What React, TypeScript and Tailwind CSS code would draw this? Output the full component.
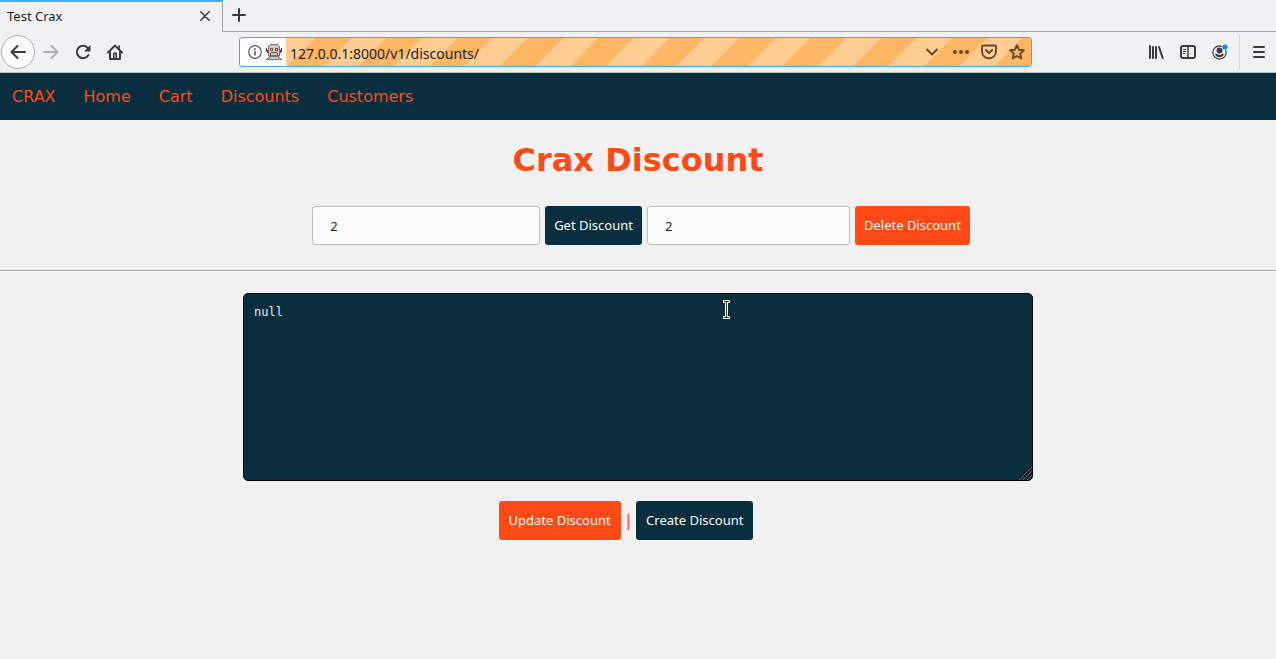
import { useState } from "react";

const navLinks = ["CRAX", "Home", "Cart", "Discounts", "Customers"];

function BackIcon() {
  return (
    <svg width="16" height="16" viewBox="0 0 16 16" fill="none" stroke="#3b3b3d" strokeWidth="2" strokeLinecap="round" strokeLinejoin="round">
      <path d="M15 8H1.500M7.500 2 1.500 8l6 6" />
    </svg>
  );
}

function ForwardIcon() {
  return (
    <svg width="16" height="16" viewBox="0 0 16 16" fill="none" stroke="#b0b0b2" strokeWidth="2" strokeLinecap="round" strokeLinejoin="round">
      <path d="M1 8h13.500M8.500 2l6 6-6 6" />
    </svg>
  );
}

function ReloadIcon() {
  return (
    <svg width="16" height="16" viewBox="0 0 16 16" fill="none">
      <path d="M13.200 4.500A6.200 6.200 0 1 0 13.500 11" stroke="#3b3b3d" strokeWidth="2" strokeLinecap="round" />
      <path d="M15.500 1v6.500H9z" fill="#3b3b3d" />
    </svg>
  );
}

function HomeIcon() {
  return (
    <svg width="16" height="16" viewBox="0 0 16 16" fill="none" stroke="#3b3b3d" strokeWidth="2" strokeLinecap="round" strokeLinejoin="round">
      <path d="M1 8.500 8 1.500l7 7M3 8v7h10V8" />
      <path d="M12.200 2v2.500" strokeWidth="1.600" />
      <path d="M6.800 14V9.300h2.400V14" strokeWidth="1.600" />
    </svg>
  );
}

function InfoIcon() {
  return (
    <svg width="14" height="14" viewBox="0 0 14 14" fill="none" stroke="#5e5e60">
      <circle cx="7" cy="7" r="6.300" strokeWidth="1.200" />
      <path d="M7 6.200v4.300M7 3.300v1.600" strokeWidth="1.700" />
    </svg>
  );
}

function RobotIcon() {
  return (
    <svg width="16" height="16" viewBox="0 0 16 16" shapeRendering="crispEdges">
      <path d="M0 4h1v4H0zM15 4h1v4h-1zM1 6h1v3H1zM14 6h1v3h-1z" fill="#c01030" />
      <path d="M4 0h8v1h1v1h1v10h-1v1h1v1h1v1h1v1H0v-1h1v-1h1v-1h1v-1H2V2h1V1h1z" fill="#77716e" />
      <path d="M4 1h8v1h1v9H3V2h1zM4 13h8v1H4zM2 14h12v1H2z" fill="#cdc9c5" />
      <path d="M4 4h3v3H4zM9 4h3v3H9z" fill="#75543a" />
      <path d="M5 5h1v1H5zM10 5h1v1h-1z" fill="#ffe0a0" />
      <path d="M5 8h6v1h1v2h-1V9H5v2H4V9h1z" fill="#5a5350" />
      <path d="M5 9h6v1H5z" fill="#e8b7a8" />
    </svg>
  );
}

function PocketIcon() {
  return (
    <svg width="16" height="16" viewBox="0 0 16 16" fill="none" stroke="#624b2f" strokeLinecap="round" strokeLinejoin="round" strokeWidth="1.900">
      <path d="M2 1.500h12a1 1 0 0 1 1 1V7.500a7 6.800 0 0 1-14 0v-5a1 1 0 0 1 1-1z" />
      <path d="m4.800 6 3.200 3 3.200-3" />
    </svg>
  );
}

function StarIcon() {
  return (
    <svg width="16" height="16" viewBox="0 0 16 16" fill="none" stroke="#624b2f" strokeLinejoin="round" strokeWidth="1.900">
      <path d="m8 1.200 2 4.500 4.900.5-3.700 3.300 1.100 5L8 12l-4.300 2.500 1.100-5L1.100 6.200 6 5.700z" />
    </svg>
  );
}

function LibraryIcon() {
  return (
    <svg width="16" height="16" viewBox="0 0 16 16" fill="none" stroke="#3b3b3d" strokeWidth="2" strokeLinecap="round">
      <path d="M2 2v12M5 3v11M8 3v11M11 3l3.700 11" />
    </svg>
  );
}

function SidebarIcon() {
  return (
    <svg width="16" height="16" viewBox="0 0 16 16" fill="none" stroke="#3b3b3d">
      <rect x="1" y="2" width="14" height="12" rx="2" strokeWidth="2" />
      <path d="M8 2v12" strokeWidth="1.500" />
      <path d="M3 5.500h3M3 7.500h3M3 9.500h2" strokeWidth="1" />
    </svg>
  );
}

function AccountIcon() {
  return (
    <svg width="16" height="16" viewBox="0 0 16 16" fill="none">
      <circle cx="7.500" cy="8.500" r="6.600" stroke="#3b3b3d" strokeWidth="1.200" />
      <circle cx="7.500" cy="6.500" r="3" fill="#3b3b3d" />
      <path d="M3.200 9.800h1.300c1.700 1.500 4.300 1.500 6 0h1.300c0 2-2 3.400-4.300 3.400s-4.300-1.400-4.300-3.400z" fill="#3b3b3d" />
      <circle cx="13" cy="3" r="3.400" fill="#f0f1f3" />
      <circle cx="13" cy="3" r="2.600" fill="#0a84ff" />
    </svg>
  );
}

function BrowserChrome() {
  const [url, setUrl] = useState("127.0.0.1:8000/v1/discounts/");
  return (
    <header className="border-b border-[#b9bcbd] bg-[#f0f1f3] font-['Noto_Sans',sans-serif] text-[#1d1d1f]">
      <div className="flex h-8">
        <div className="flex w-[223px] items-center justify-between border-t-2 border-r border-t-[#3daee9] border-r-[#a3a6a7] pr-[11px] pb-0.5 pl-[7px]">
          <span className="text-[13px] leading-4">Test Crax</span>
          <button aria-label="Close tab" className="p-px">
            <svg width="10" height="10" viewBox="0 0 10 10" stroke="#3b3b3d" strokeWidth="1.500" strokeLinecap="round">
              <path d="m.8.8 8.400 8.400M9.200.8.800 9.200" />
            </svg>
          </button>
        </div>
        <div className="flex flex-1 items-center border-b border-[#a3a6a7] pb-px pl-[9px]">
          <button aria-label="New tab">
            <svg width="14" height="14" viewBox="0 0 14 14" stroke="#3b3b3d" strokeWidth="2" strokeLinecap="round">
              <path d="M7 1v12M1 7h12" />
            </svg>
          </button>
        </div>
      </div>
      <div className="flex h-10 items-center">
        <nav aria-label="Browser" className="flex w-[239px] items-center pl-px">
          <button aria-label="Back" className="flex size-[34px] items-center justify-center rounded-full border border-[#acaeaf] bg-[#fcfcfc]">
            <BackIcon />
          </button>
          <div className="flex items-center gap-4 pl-2">
            <button aria-label="Forward"><ForwardIcon /></button>
            <button aria-label="Reload"><ReloadIcon /></button>
            <button aria-label="Home page"><HomeIcon /></button>
          </div>
        </nav>
        <div className="flex h-[30px] flex-1 overflow-hidden rounded-[3px] border border-[#3daee9] bg-white">
          <div className="flex w-[46px] items-center gap-1 pl-2">
            <InfoIcon />
            <RobotIcon />
          </div>
          <div className="flex flex-1 items-center bg-[repeating-linear-gradient(135deg,#ffcc91_-4px,#ffcc91_21px,#fdb663_21px,#fdb663_46px)] pr-1.5 pl-1">
            <input
              aria-label="Address"
              className="h-full min-w-0 flex-1 bg-transparent pt-0.5 text-sm leading-5 outline-none"
              value={url}
              onChange={(e) => setUrl(e.target.value)}
            />
            <div className="flex items-center gap-3">
              <button aria-label="Show history" className="px-[3px]">
                <svg width="12" height="12" viewBox="0 0 12 12" fill="none" stroke="#624b2f" strokeWidth="1.900" strokeLinecap="round" strokeLinejoin="round">
                  <path d="m1 3.500 5 5 5-5" />
                </svg>
              </button>
              <button aria-label="Page actions">
                <svg width="16" height="16" viewBox="0 0 16 16" fill="#624b2f">
                  <circle cx="2" cy="8" r="2" />
                  <circle cx="8" cy="8" r="2" />
                  <circle cx="14" cy="8" r="2" />
                </svg>
              </button>
              <button aria-label="Save to Pocket"><PocketIcon /></button>
              <button aria-label="Bookmark this page"><StarIcon /></button>
            </div>
          </div>
        </div>
        <div className="flex w-[244px] items-center justify-end self-stretch">
          <div className="flex items-center gap-4 pr-[11px]">
            <button aria-label="Library"><LibraryIcon /></button>
            <button aria-label="Sidebars"><SidebarIcon /></button>
            <button aria-label="Account"><AccountIcon /></button>
          </div>
          <div className="flex h-[34px] items-center border-l border-[#d3d5d7] pr-2.5 pl-3">
            <button aria-label="Open menu">
              <svg width="14" height="14" viewBox="0 0 14 14" stroke="#3b3b3d" strokeWidth="2" strokeLinecap="round">
                <path d="M2 2h10M2 7h10M2 12h10" />
              </svg>
            </button>
          </div>
        </div>
      </div>
    </header>
  );
}

const buttonBase = "h-[39px] rounded-[3px] text-[13px] text-[#fcfcfc] whitespace-nowrap";
const inputBase = "h-[39px] rounded-[3px] border border-[#bcbebf] bg-[#fcfcfc] px-[17px] text-[13px] text-[#232627] outline-none";

export default function App() {
  const [getId, setGetId] = useState("2");
  const [deleteId, setDeleteId] = useState("2");
  const [body, setBody] = useState("null");

  return (
    <div className="min-h-screen bg-[#f1f1f1] font-['Noto_Sans',sans-serif]">
      <BrowserChrome />
      <nav aria-label="Main" className="flex h-[47px] items-center gap-7 bg-[#092e3e] px-3 font-['DejaVu_Sans',sans-serif] text-base text-[#ff4a17]">
        {navLinks.map((link) => (
          <a key={link} href="#">{link}</a>
        ))}
      </nav>
      <main>
        <h1 className="pt-5 text-center font-['DejaVu_Sans',sans-serif] text-[32px] leading-10 font-bold text-[#ff4a17]">Crax Discount</h1>
        <form className="flex justify-center gap-[5px] pt-[26px] pb-[25px] pl-1.5" onSubmit={(e) => e.preventDefault()}>
          <input aria-label="Discount to get" className={`${inputBase} w-[228px]`} value={getId} onChange={(e) => setGetId(e.target.value)} />
          <button type="button" className={`${buttonBase} bg-[#092e3e] px-[9px]`}>Get Discount</button>
          <input aria-label="Discount to delete" className={`${inputBase} w-[203px]`} value={deleteId} onChange={(e) => setDeleteId(e.target.value)} />
          <button type="button" className={`${buttonBase} bg-[#ff4a17] px-[9px]`}>Delete Discount</button>
        </form>
        <hr className="border-t border-b border-t-[#a5a5a5] border-b-[#fcfcfc]" />
        <div className="relative mx-auto mt-[21px] w-full max-w-[790px]">
          <textarea
            aria-label="Response"
            className="block h-[188px] w-full resize-none rounded-[5px] border border-black bg-[#092e3e] px-2.5 py-2.5 font-['DejaVu_Sans_Mono',monospace] text-xs leading-4 text-[#e6eaec] outline-none"
            value={body}
            onChange={(e) => setBody(e.target.value)}
          />
          <svg className="pointer-events-none absolute right-px bottom-px" width="14" height="14" viewBox="0 0 14 14" stroke="#7d8c94" strokeWidth="1">
            <path d="M1 14 14 1M5 14l9-9M9 14l5-5" strokeDasharray="1.400 .7" />
            <path d="M0 13 13 0M4 13l9-9M8 13l5-5" stroke="#03151d" />
          </svg>
          <svg className="pointer-events-none absolute top-[7px] left-[480px]" width="7" height="19" viewBox="0 0 7 19" fill="none">
            <path d="M0 1.500h7M3.500 1.500v16M0 17.500h7" stroke="#fff" strokeWidth="3" />
            <path d="M1 1.500h5M3.500 1.500v16M1 17.500h5" stroke="#333" strokeWidth="1" />
          </svg>
        </div>
        <div className="flex items-center justify-center pt-5 pr-6">
          <button type="button" className={`${buttonBase} bg-[#ff4a17] px-2.5`}>Update Discount</button>
          <span className="px-[5px] font-['DejaVu_Sans',sans-serif] text-base text-[#ff4a17]">|</span>
          <button type="button" className={`${buttonBase} bg-[#092e3e] px-2.5`}>Create Discount</button>
        </div>
      </main>
    </div>
  );
}
